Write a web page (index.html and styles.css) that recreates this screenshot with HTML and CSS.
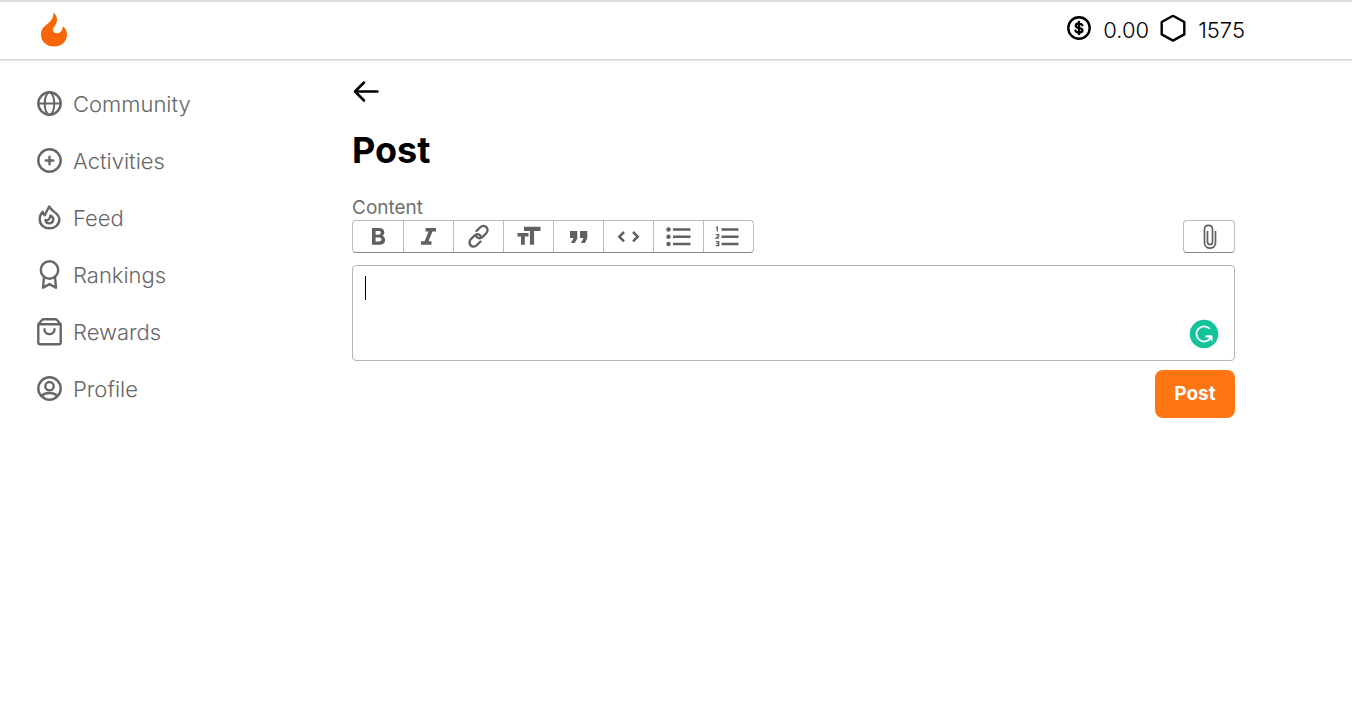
FILE: index.html
```html
<!DOCTYPE html>
<html lang="en">
<head>
<meta charset="utf-8">
<meta name="viewport" content="width=device-width, initial-scale=1">
<title>Post</title>
<link rel="stylesheet" href="styles.css">
</head>
<body>
<header class="topbar">
  <a class="logo" href="#" aria-label="Home">
    <svg width="28" height="36" viewBox="0 0 28 36"><path d="M13.4 .8C17.200 3.200 18 8.300 15.800 12.200C14.100 15.100 12.400 16.600 13.200 18.900C14 21.200 16.800 21.800 19.200 20.900C22 19.800 22.200 17 22.800 14.300C25.600 16.600 27 19.400 27 22.500C27 29.700 21.400 34.500 14 34.500C6.700 34.500 1 29.700 1 22.500C1 16.300 5.400 13.500 8.800 10.700C12 8.100 13.600 5 13.400 .8Z"/></svg>
  </a>
  <div class="balance">
    <svg class="line" width="26" height="30" viewBox="0 1 26 30"><circle cx="13" cy="14" r="10.7" stroke-width="2.4"/><path stroke-width="2.3" d="M16.300 11.300c-.5-1.200-1.600-1.800-3.300-1.800-2 0-3.200.8-3.200 2.200 0 3.300 6.700 1.400 6.700 4.600 0 1.400-1.300 2.200-3.400 2.200-1.900 0-3.100-.7-3.600-1.900M13 7.800v12.400"/></svg>
    <span class="cash">0.00</span>
    <svg class="line" width="28" height="30" viewBox="0 1 28 30"><path stroke-width="2.4" d="M14 1.800 25.300 8v12.400L14 26.600 2.700 20.400V8z"/></svg>
    <span>1575</span>
  </div>
</header>
<div class="page">
  <nav class="sidebar" aria-label="Main">
    <a href="#"><svg class="line" viewBox="0 0 28 32"><circle cx="13.500" cy="15.500" r="11.200"/><ellipse cx="13.500" cy="15.500" rx="4.800" ry="11.200" stroke-width="2"/><path stroke-width="2" d="M2.500 15.500h22"/></svg>Community</a>
    <a href="#"><svg class="line" viewBox="0 0 28 32"><circle cx="13.500" cy="15.500" r="11.200"/><path d="M9.800 15.500h7.400M13.500 11.800v7.400"/></svg>Activities</a>
    <a href="#"><svg class="line" viewBox="0 0 28 32"><path d="M13.200 4.500C15 9.500 23.300 10.800 23.300 17.200c0 5.400-4.300 9.100-9.800 9.100S3.700 22.600 3.700 17.200c0-2.700 1-5.300 3-7.400.4 1.700 1.100 2.800 2.100 3.400 1.200-2.600 2.700-5.600 4.400-8.700Z"/><path d="M14.300 13.600c2.500 1 3.300 2.800 2.900 4.700-.5 2.200-2.200 3.200-4 3.100-2.100-.1-3.500-1.500-3.700-3.400 2.400.7 4.800-1 4.800-4.400Z"/></svg>Feed</a>
    <a href="#"><svg class="line" viewBox="0 0 28 32"><circle cx="13.500" cy="11" r="8.700"/><path d="M8 18 7 28.700l6.500-3.600 6.500 3.600-1-10.700"/></svg>Rankings</a>
    <a href="#"><svg class="line" viewBox="0 0 28 32"><path d="M2.300 8.200v18.300q0 1.700 1.700 1.700h19q1.700 0 1.700-1.700V8.200L21 4q-.7-.8-1.800-.8H7.800Q6.700 3.200 6 4L2.300 8.200H24.700"/><path d="M8.500 13.200c0 6.600 10 6.600 10 0"/></svg>Rewards</a>
    <a href="#"><svg class="line" viewBox="0 0 28 32"><circle cx="13.500" cy="15.500" r="11.200"/><circle cx="13.500" cy="13.200" r="4.200"/><path d="M5.800 22.800c3.600-3.700 11.800-3.700 15.400 0"/></svg>Profile</a>
  </nav>
  <main class="content">
    <button class="back" type="button" aria-label="Back"><svg class="line" width="28" height="24" viewBox="0 0 28 24"><path stroke-width="2.500" d="M25.500 11.500H3M12 2.500 3 11.500l9 9"/></svg></button>
    <h1>Post</h1>
    <label class="field-label" for="post-content">Content</label>
    <div class="toolbar">
      <div class="tools">
        <button type="button" aria-label="Bold"><svg viewBox="0 0 30 28"><path fill-rule="evenodd" d="M9 5h7.200c3.400 0 5.100 1.700 5.100 4.200 0 1.700-.8 2.900-2.100 3.600 1.800.6 2.900 2 2.900 4.100 0 3.100-2.200 4.800-5.800 4.800H9zm3.600 3v3.700h2.800c1.600 0 2.400-.6 2.400-1.900 0-1.200-.8-1.800-2.400-1.800zm0 6.600v4h3.100c1.800 0 2.700-.7 2.700-2 0-1.400-.9-2-2.700-2z"/></svg></button>
        <button type="button" aria-label="Italic"><svg viewBox="0 0 30 28"><path d="M11.500 5H22V8.500H18.500L14.500 18.300H17.500V21.800H7V18.300H10.500L14.600 8.500H11.500z"/></svg></button>
        <button type="button" aria-label="Link"><svg class="line" viewBox="0 0 30 28"><path d="m12.500 8 3.500-3.500c4.500-4.300 10.300 1.500 6 6L18.500 14c-1.800 1.800-4.400 1.600-6-.2M16.500 18.500 13 22C8.500 26.300 2.700 20.500 7 16L10.500 12.500c1.800-1.800 4.400-1.600 6 .2"/></svg></button>
        <button type="button" aria-label="Heading"><svg viewBox="0 0 30 28"><path d="M10 3.800H26.500V8H20.100V21.700h-4.200V8H10zM3.500 9.900h11v3.700h-3.700v8.100H7v-8.100H3.500z"/></svg></button>
        <button type="button" aria-label="Quote"><svg viewBox="0 0 30 28"><path d="M6 8h7.300v7.400L10.800 20H7l2.500-5H6zm10 0h7.300v7.400L20.800 20H17l2.500-5H16z"/></svg></button>
        <button type="button" aria-label="Code"><svg viewBox="0 0 30 28"><path fill="none" stroke="currentColor" stroke-width="2.500" d="m10 9-4.700 4.700 4.700 4.700M19 9l4.700 4.700-4.700 4.700"/></svg></button>
        <button type="button" aria-label="Bulleted list"><svg viewBox="0 0 30 28"><circle cx="4.500" cy="6.500" r="2.200"/><circle cx="4.500" cy="13.800" r="2.200"/><circle cx="4.500" cy="21" r="2.200"/><path d="M9 5.300h17.500v2.400H9zm0 7.300h17.500V15H9zm0 7.200h17.500v2.400H9z"/></svg></button>
        <button type="button" aria-label="Numbered list"><svg viewBox="0 0 30 28"><path d="M7.500 5.300h17v2.400h-17zm0 7.300h17V15h-17zm0 7.200h17v2.400h-17z"/><path fill="none" stroke="currentColor" stroke-width="1.300" d="M2 4.700 3.300 4V8.500M1.700 11.700h3v1.200l-2.500 2.200H5M1.700 18.600h3v4.100h-3m.8-2.100h2"/></svg></button>
      </div>
      <button class="attach" type="button" aria-label="Attach file"><svg class="line" viewBox="0 0 30 28"><path stroke-width="1.700" d="M21.500 8.500v11.300c0 7-11 7-11 0V6.500c0-5.400 8-5.400 8 0v12.400c0 3.400-5 3.400-5 0V8.500"/></svg></button>
    </div>
    <div class="editor">
      <textarea id="post-content" spellcheck="false"></textarea>
      <span class="caret"></span>
      <svg class="assistant" width="30" height="30" viewBox="0 0 30 30"><circle cx="15" cy="15" r="14.300" fill="#15c39a"/><path fill="none" stroke="#fff" stroke-width="1.800" d="M20.800 9.900A7.600 7.600 0 1 0 21.500 19M22 17.500H16.500"/><path fill="#fff" d="M17.500 16.600H23.500V22.500z"/></svg>
    </div>
    <div class="actions"><button class="submit" type="button">Post</button></div>
  </main>
</div>
</body>
</html>
```

FILE: styles.css
```css
* { box-sizing: border-box; }
body {
  margin: 0;
  background: #fff;
  color: #000;
  font-family: Inter, "Liberation Sans", sans-serif;
  font-size: 22px;
  line-height: 28px;
}
button { font: inherit; color: inherit; padding: 0; border: 0; background: none; cursor: pointer; }
svg { display: block; flex: none; fill: currentColor; }
.line { fill: none; stroke: currentColor; stroke-width: 2.4; stroke-linecap: round; stroke-linejoin: round; }

.topbar {
  display: flex;
  align-items: center;
  justify-content: space-between;
  height: 60px;
  padding: 0 107px 2px 40px;
  border-top: 2px solid #dedede;
  border-bottom: 1px solid #d4d4d4;
  box-shadow: 0 1px 1px #eee;
}
.logo { color: #f76707; }
.balance { display: flex; align-items: center; gap: 11px; font-weight: 300; }
.cash { margin-right: -1px; }

.page { display: grid; grid-template-columns: 352px minmax(0, 1fr); padding-right: 117px; }

.sidebar { padding: 15px 0 0 36px; }
.sidebar a {
  display: flex;
  align-items: center;
  gap: 9px;
  height: 57px;
  color: #666;
  font-weight: 300;
  text-decoration: none;
}
.sidebar svg { width: 28px; height: 32px; }

.content { padding-top: 20px; }
.back { display: block; }
h1 { margin: 24px 0; font-size: 36px; line-height: 44px; font-weight: 700; }
.field-label { display: block; font-size: 19px; line-height: 24px; color: #6f6f6f; }

.toolbar { display: flex; justify-content: space-between; color: #606060; margin-bottom: 12px; }
.tools, .attach {
  display: flex;
  height: 33px;
  border: 1px solid #bbb;
  border-bottom-color: #888;
  border-radius: 4px;
}
.tools button { display: grid; place-items: center; width: 50px; }
.tools button + button { border-left: 1px solid #bbb; }
.toolbar svg { width: 30px; height: 28px; }
.attach { width: 52px; align-items: center; justify-content: center; }

.editor { position: relative; }
.editor textarea {
  display: block;
  width: 100%;
  height: 96px;
  padding: 8px 12px;
  border: 1px solid #b5b5b5;
  border-radius: 4px;
  background: none;
  font: inherit;
  resize: none;
  outline: 0;
}
.caret { position: absolute; left: 13px; top: 11px; width: 1px; height: 24px; background: #000; }
.assistant { position: absolute; right: 16px; bottom: 12px; }

.actions { display: flex; justify-content: flex-end; padding-top: 9px; }
.submit {
  width: 80px;
  height: 48px;
  border-radius: 8px;
  background: #ff7511;
  color: #fff;
  font-size: 19px;
  font-weight: 700;
}
```
